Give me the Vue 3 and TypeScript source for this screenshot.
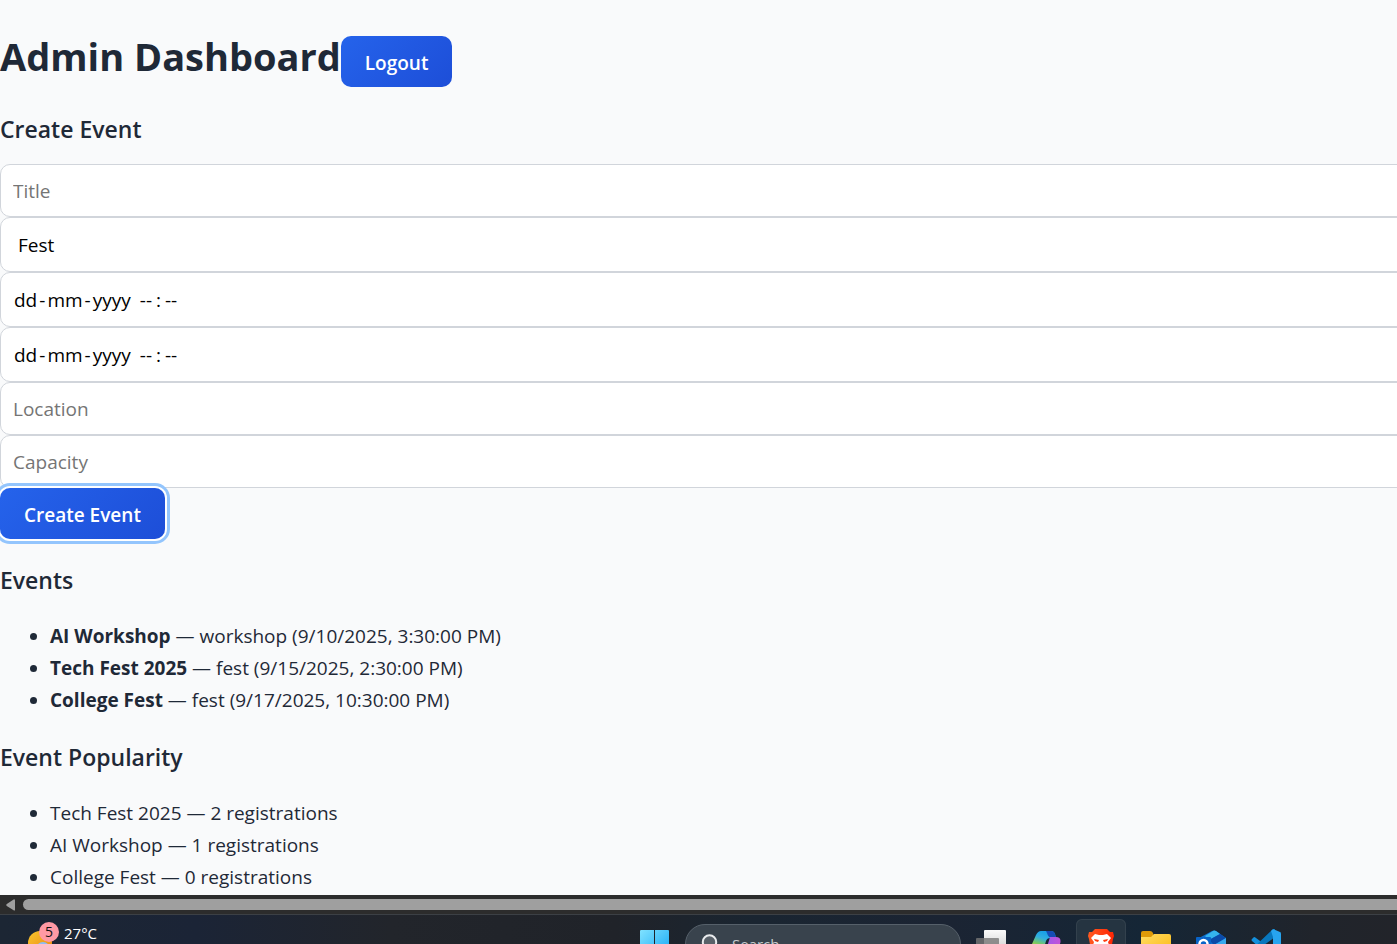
<script setup lang="ts">
import { reactive } from 'vue'

interface EventItem {
  title: string
  kind: string
  when: string
}

interface Popularity {
  title: string
  count: number
}

const form = reactive({ title: '', type: 'fest', start: '', end: '', location: '', capacity: '' })

const dateFields: { key: 'start' | 'end'; label: string }[] = [
  { key: 'start', label: 'Start' },
  { key: 'end', label: 'End' },
]

const events: EventItem[] = [
  { title: 'AI Workshop', kind: 'workshop', when: '9/10/2025, 3:30:00 PM' },
  { title: 'Tech Fest 2025', kind: 'fest', when: '9/15/2025, 2:30:00 PM' },
  { title: 'College Fest', kind: 'fest', when: '9/17/2025, 10:30:00 PM' },
]

const popularity: Popularity[] = [
  { title: 'Tech Fest 2025', count: 2 },
  { title: 'AI Workshop', count: 1 },
  { title: 'College Fest', count: 0 },
]
</script>

<template>
  <div class="screen">
    <main class="page">
      <header class="top">
        <h1>Admin Dashboard</h1>
        <button class="btn" type="button">Logout</button>
      </header>

      <h3>Create Event</h3>
      <form class="form" @submit.prevent>
        <input v-model="form.title" class="field" type="text" placeholder="Title" aria-label="Title" />
        <select v-model="form.type" class="field tall choice" aria-label="Type">
          <option value="fest">Fest</option>
          <option value="workshop">Workshop</option>
        </select>
        <div v-for="d in dateFields" :key="d.key" class="date">
          <input v-model="form[d.key]" class="field tall" type="text" :aria-label="d.label" />
          <div v-if="!form[d.key]" class="mask" aria-hidden="true">
            <span class="day"><span>dd</span><span>-</span><span>mm</span><span>-</span><span>yyyy</span></span>
            <span class="time"><span>--</span><span>:</span><span>--</span></span>
          </div>
        </div>
        <input v-model="form.location" class="field" type="text" placeholder="Location" aria-label="Location" />
        <input v-model="form.capacity" class="field" type="text" placeholder="Capacity" aria-label="Capacity" />
        <button class="btn active" type="submit">Create Event</button>
      </form>

      <h3>Events</h3>
      <ul>
        <li v-for="e in events" :key="e.title">
          <strong>{{ e.title }}</strong> — {{ e.kind }} ({{ e.when }})
        </li>
      </ul>

      <h3>Event Popularity</h3>
      <ul>
        <li v-for="p in popularity" :key="p.title">{{ p.title }} — {{ p.count }} registrations</li>
      </ul>
    </main>

    <div class="scrollbar">
      <svg class="arrow" viewBox="0 0 9 12" aria-hidden="true">
        <path d="M8 .3Q9 .3 9 1.3V10.7Q9 11.8 8 11.5L.8 7Q-.3 6 .8 5Z" fill="#9f9f9f" />
      </svg>
      <div class="thumb"></div>
    </div>

    <footer class="taskbar">
      <div class="weather">
        <div class="weather-icon">
          <svg viewBox="0 0 32 26" aria-hidden="true">
            <defs>
              <linearGradient id="sun" x1="0" y1="0" x2="1" y2="1">
                <stop offset="0" stop-color="#f7c52d" />
                <stop offset="1" stop-color="#ee8412" />
              </linearGradient>
            </defs>
            <circle cx="12" cy="13" r="12" fill="url(#sun)" />
            <circle cx="15" cy="19" r="7" fill="#8fbdf3" />
          </svg>
          <span class="badge">5</span>
        </div>
        <span class="temp">27°C</span>
      </div>

      <div class="apps">
        <div class="tile">
          <svg viewBox="0 0 30 30" aria-hidden="true">
            <defs>
              <linearGradient id="win" x1="0" y1="0" x2="1" y2="1">
                <stop offset="0" stop-color="#80e2ff" />
                <stop offset="1" stop-color="#10a4f4" />
              </linearGradient>
            </defs>
            <path d="M0 2Q0 1 1 1H14V15H0ZM15 1H28Q29 1 29 2V15H15ZM0 16H14V30H0ZM15 16H29V30H15Z" fill="url(#win)" />
          </svg>
        </div>
        <div class="search">
          <svg viewBox="0 0 20 20" aria-hidden="true">
            <circle cx="8.500" cy="8" r="6.700" fill="#596169" stroke="#e9ebed" stroke-width="2" />
            <path d="M13 13L18 18" stroke="#e9ebed" stroke-width="2" />
          </svg>
          <span>Search</span>
        </div>
        <div class="tile">
          <svg viewBox="0 0 30 30" aria-hidden="true">
            <defs>
              <linearGradient id="task" x1="0" y1="0" x2="0" y2="1">
                <stop offset="0" stop-color="#fafafa" />
                <stop offset="1" stop-color="#cfcfcf" />
              </linearGradient>
            </defs>
            <rect x="8" y="1" width="22" height="21" rx="1" fill="url(#task)" />
            <rect x="0" y="9" width="23" height="20" rx="1" fill="#777" opacity=".8" />
          </svg>
        </div>
        <div class="tile">
          <svg viewBox="0 0 30 30" aria-hidden="true">
            <defs>
              <linearGradient id="copA" x1=".6" y1="0" x2=".2" y2="1">
                <stop offset="0" stop-color="#149ee8" />
                <stop offset=".35" stop-color="#31aee0" />
                <stop offset=".65" stop-color="#79ca62" />
                <stop offset="1" stop-color="#e8cf36" />
              </linearGradient>
              <linearGradient id="copB" x1="0" y1="0" x2="1" y2="0">
                <stop offset="0" stop-color="#8f5cf0" />
                <stop offset="1" stop-color="#c453d8" />
              </linearGradient>
            </defs>
            <path d="M10 2H20Q23 2 24 5L25 9H19Q16 9 15 12L12 22H4Q-1 21 1 15L5 6Q7 2 10 2Z" fill="url(#copA)" />
            <path d="M15 2H20Q23 2 24 5L25 9H20Q17 8 16 4Z" fill="#174bb5" />
            <path d="M19 8H25Q31 8 29 15L26 24Q24 29 20 29H10L14 25Z" fill="url(#copB)" />
          </svg>
        </div>
        <div class="tile current">
          <svg viewBox="0 0 30 30" aria-hidden="true">
            <defs>
              <linearGradient id="brave" x1="0" y1="0" x2="1" y2="0">
                <stop offset="0" stop-color="#ff5a20" />
                <stop offset="1" stop-color="#ff2605" />
              </linearGradient>
            </defs>
            <path d="M9 0H21L24 3L27 3L28 7L27 10L25 21L15 29L5 21L3 10L2 7L3 3L6 3Z" fill="url(#brave)" />
            <path d="M9 5L13 6H17L21 5L25 9L22 13L23 16L19 18L17 21H13L11 18L7 16L8 13L5 9Z" fill="#fff" />
            <path d="M8 10L13 11L12 13L9 12ZM22 10L17 11L18 13L21 12ZM13 16H17L15 18Z" fill="#ff3c10" />
          </svg>
        </div>
        <div class="tile">
          <svg viewBox="0 0 30 30" aria-hidden="true">
            <defs>
              <linearGradient id="folder" x1="0" y1="0" x2="1" y2="1">
                <stop offset="0" stop-color="#ffdc62" />
                <stop offset="1" stop-color="#fcb913" />
              </linearGradient>
            </defs>
            <path d="M0 4Q0 2 2 2H9Q11 2 12 4L13 8H0Z" fill="#df9a07" />
            <path d="M0 8H10L13 5H28Q30 5 30 7V26H0Z" fill="url(#folder)" />
          </svg>
        </div>
        <div class="tile">
          <svg viewBox="0 0 30 30" aria-hidden="true">
            <path d="M3 9L16 2Q18 1 20 2L30 9V26H3Z" fill="#0f6fce" />
            <path d="M9 7L17 2Q18 1 20 2L24 5L13 11Z" fill="#35b4ed" />
            <path d="M13 11L24 5L30 9L18 16Z" fill="#0b4aa8" />
            <path d="M18 16L30 9V26H15Z" fill="#37a9ee" />
            <rect x="0" y="8" width="15" height="16" rx="1" fill="#0964c8" />
            <circle cx="7.500" cy="15" r="4" fill="none" stroke="#fff" stroke-width="2.500" />
          </svg>
        </div>
        <div class="tile">
          <svg viewBox="0 0 30 30" aria-hidden="true">
            <path d="M1 10L3 8Q4 8 5 9L24 23V29L22 30L1 12Q0 11 1 10Z" fill="#1490dd" />
            <path d="M1 20L21 1L24 0V8L5 22Q4 23 3 22L1 21Z" fill="#0877bd" />
            <path d="M22 0L29 3Q30 3 30 5V25Q30 27 28 28L22 30V8L20 2Z" fill="#27a4ef" />
          </svg>
        </div>
      </div>
    </footer>
  </div>
</template>

<style>
body {
  margin: 0;
}
</style>

<style scoped>
.screen {
  display: flex;
  flex-direction: column;
  height: 100vh;
  overflow: hidden;
  background: #f9fafb;
  color: #1f2937;
  font-family: 'Segoe UI', 'Open Sans', 'Noto Sans', sans-serif;
  font-size: 19px;
  line-height: 32px;
}

.page {
  flex: 1;
  min-height: 0;
  overflow: hidden;
}

.top {
  display: flex;
  align-items: flex-start;
  padding-top: 24px;
}

h1 {
  margin: 0;
  font-size: 38px;
  font-weight: 700;
  line-height: 64px;
}

.top .btn {
  margin-top: 12px;
}

h3 {
  margin: 21px 0 14px;
  font-size: 23px;
  font-weight: 600;
  line-height: 40px;
}

.btn {
  box-sizing: border-box;
  height: 51px;
  padding: 3px 24px 0;
  border: 0;
  border-radius: 10px;
  background: linear-gradient(135deg, #2563eb, #1d4ed8);
  color: #fff;
  font-family: inherit;
  font-size: 19px;
  font-weight: 600;
  line-height: 27px;
}

.btn.active {
  box-shadow: 0 0 0 2px #fff, 0 0 0 5px #93c5fd;
}

.form {
  display: flex;
  flex-direction: column;
  align-items: flex-start;
  padding-top: 1px;
}

.field {
  box-sizing: content-box;
  width: 100%;
  height: 51px;
  margin: 0;
  padding: 0 12px;
  border: 1px solid #d1d5db;
  border-radius: 10px;
  background: #fff;
  color: #000;
  font-family: inherit;
  font-size: 19px;
  outline: none;
}

.field.tall {
  height: 53px;
}

.field::placeholder {
  color: #757575;
}

.date {
  display: flex;
  position: relative;
  width: 100%;
}

.date .field {
  flex: none;
}

.mask {
  display: flex;
  position: absolute;
  inset: 0 auto 0 14px;
  align-items: center;
  gap: 9px;
  color: #000;
  pointer-events: none;
}

.day {
  display: flex;
  gap: 2px;
}

.time {
  display: flex;
  gap: 4px;
}

.choice {
  appearance: none;
  padding-left: 17px;
}

ul {
  margin: 0;
  padding: 6px 0 0 50px;
}

.scrollbar {
  display: flex;
  align-items: center;
  gap: 8px;
  height: 19px;
  padding-left: 6px;
  background: #2c2c2c;
}

.arrow {
  width: 9px;
  height: 12px;
}

.thumb {
  flex: 1;
  height: 11px;
  border-radius: 6px 0 0 6px;
  background: #9f9f9f;
}

.taskbar {
  display: flex;
  box-sizing: border-box;
  height: 30px;
  overflow: hidden;
  border-top: 1px solid #3c4045;
  background: linear-gradient(90deg, #1c2634, #1b2436 14%, #22252b 28%, #202329 44%, #1a2531 54%, #1b2433 68%, #152636 82%, #20242b 94%, #22242a);
}

.weather {
  display: flex;
  flex: 0 0 602px;
  align-items: flex-start;
  gap: 5px;
  padding: 6px 0 0 28px;
  color: #fff;
}

.weather-icon {
  position: relative;
  width: 31px;
  height: 35px;
}

.weather-icon svg {
  display: block;
  width: 32px;
  height: 26px;
  margin-top: 9px;
}

.badge {
  position: absolute;
  top: 1px;
  right: 0;
  width: 20px;
  height: 20px;
  border-radius: 50%;
  background: #ff99a4;
  color: #111;
  font-size: 14px;
  line-height: 20px;
  text-align: center;
}

.temp {
  font-size: 15px;
  line-height: 24px;
}

.apps {
  display: flex;
  align-items: flex-start;
  gap: 5px;
  padding-top: 4px;
}

.tile {
  display: grid;
  flex: none;
  box-sizing: border-box;
  width: 50px;
  height: 50px;
  place-items: center;
}

.tile svg {
  width: 30px;
  height: 30px;
}

.tile.current {
  border-radius: 6px;
  background: #253441;
  box-shadow: inset 0 0 0 1px #33414d;
}

.search {
  display: flex;
  flex: none;
  align-items: center;
  box-sizing: border-box;
  width: 276px;
  height: 40px;
  margin-top: 5px;
  padding-left: 15px;
  gap: 11px;
  border: 1px solid #56606a;
  border-radius: 20px;
  background: #39434d;
  color: #c6cace;
  font-size: 15px;
}

.search svg {
  width: 20px;
  height: 20px;
}
</style>
